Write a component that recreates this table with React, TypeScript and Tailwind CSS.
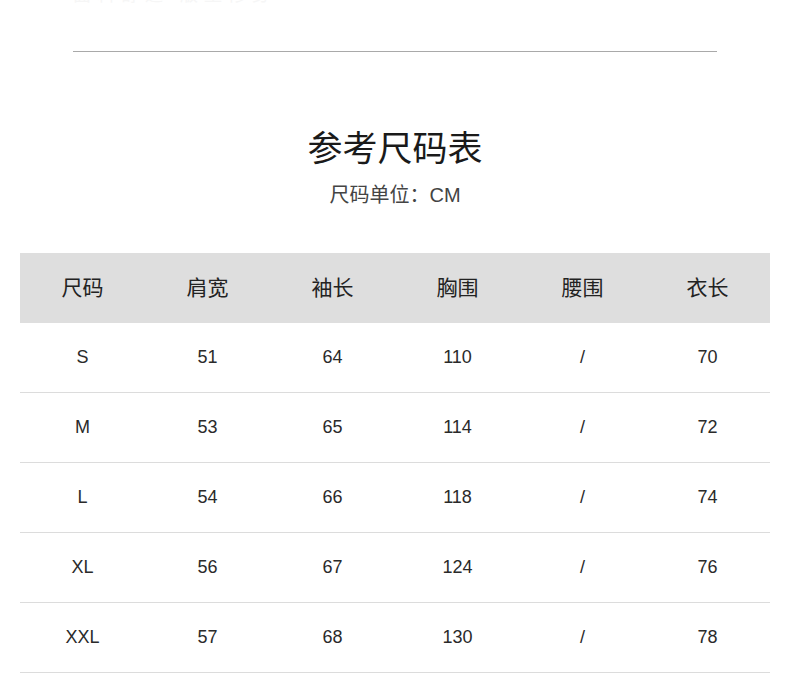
const headers = ["尺码", "肩宽", "袖长", "胸围", "腰围", "衣长"];

const rows = [
  ["S", "51", "64", "110", "/", "70"],
  ["M", "53", "65", "114", "/", "72"],
  ["L", "54", "66", "118", "/", "74"],
  ["XL", "56", "67", "124", "/", "76"],
  ["XXL", "57", "68", "130", "/", "78"],
];

export default function App() {
  return (
    <div
      className="w-[790px] h-[673px] overflow-hidden bg-white text-[#222]"
      style={{ fontFamily: '"Liberation Sans", "Noto Sans CJK SC", sans-serif' }}
    >
      <div className="h-[51px] px-[73px] overflow-hidden">
        <p className="-mt-[15px] text-[18px] leading-[20px] text-[#f6f6f6] tracking-[6px]">面料舒适 版型修身</p>
      </div>
      <div className="mx-[73px] h-px bg-[#a9a9a9]" />

      <div className="pt-[79px] flex flex-col items-center">
        <h1 className="text-[35px] leading-[36px] text-[#1a1a1a]">参考尺码表</h1>
        <p className="mt-[16px] text-[20px] leading-[24px] text-[#444]">尺码单位：CM</p>
      </div>

      <div className="mx-[20px] mt-[46px]">
        <div className="grid grid-cols-6 h-[70px] bg-[#dedede] items-center text-center text-[21px]">
          {headers.map((h) => (
            <div key={h}>{h}</div>
          ))}
        </div>
        {rows.map((r) => (
          <div key={r[0]} className="grid grid-cols-6 h-[70px] border-b border-[#dcdcdc] items-center text-center text-[18px] text-[#2a2a2a]">
            {r.map((c, i) => (
              <div key={i}>{c}</div>
            ))}
          </div>
        ))}
      </div>
    </div>
  );
}
